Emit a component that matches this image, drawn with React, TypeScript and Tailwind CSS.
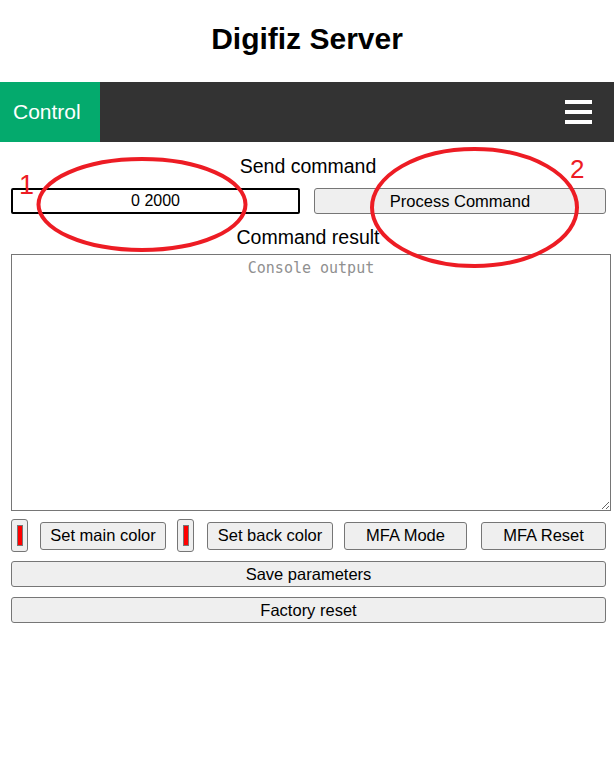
import React from "react";

const btn =
  "rounded-[3px] border border-[#767676] bg-[#efefef] text-[16.5px] text-black leading-none";

function Swatch() {
  return (
    <div className="flex h-[33px] w-[17px] shrink-0 items-center justify-center rounded-[3px] border border-[#767676] bg-[#efefef]">
      <div className="h-[21px] w-[6px] border border-[#777] bg-[#ff0000]" />
    </div>
  );
}

function Marks() {
  return (
    <svg
      className="pointer-events-none absolute left-0 top-0"
      width="614"
      height="766"
      viewBox="0 0 614 766"
    >
      <ellipse cx="142" cy="204.5" rx="103.5" ry="45.5" fill="none" stroke="#ed1c24" strokeWidth="4" />
      <ellipse cx="474.5" cy="207.5" rx="102.5" ry="58.5" fill="none" stroke="#ed1c24" strokeWidth="4" />
      <text x="19" y="194" fill="#ed1c24" fontSize="27" fontFamily="Liberation Sans, Arial, sans-serif">
        1
      </text>
      <text x="570" y="178" fill="#ed1c24" fontSize="26" fontFamily="Liberation Sans, Arial, sans-serif">
        2
      </text>
    </svg>
  );
}

export default function App() {
  return (
    <div className="relative flow-root min-h-[766px] w-full bg-white font-['Liberation_Sans',Arial,sans-serif] text-black">
      <h1 className="mb-[26px] mt-[21px] text-center text-[30px] font-bold leading-[35px]">
        Digifiz Server
      </h1>

      <nav className="flex h-[60px] items-center bg-[#333]">
        <div className="flex h-full w-[100px] items-center bg-[#04aa6d] pl-[13px] text-[21px] text-white">
          Control
        </div>
        <div className="ml-auto mr-[22px] flex flex-col gap-[6px]">
          <span className="block h-[4px] w-[27px] bg-white" />
          <span className="block h-[4px] w-[27px] bg-white" />
          <span className="block h-[4px] w-[27px] bg-white" />
        </div>
      </nav>

      <main className="pl-[11px] pr-[3px]">
        <div className="mr-[6px] mt-[13px] text-center text-[19.5px] leading-[22px]">Send command</div>
        <div className="mr-[5px] mt-[11px] flex items-center gap-[14px]">
          <input
            readOnly
            value="0 2000"
            className="h-[26px] w-[289px] rounded-[2px] border-2 border-black text-center text-[16px] outline-none"
          />
          <button className={`${btn} h-[26px] flex-1`}>Process Command</button>
        </div>

        <div className="mr-[6px] mt-[12px] text-center text-[19.5px] leading-[22px]">Command result</div>
        <textarea
          readOnly
          placeholder="Console output"
          className="mt-[6px] block h-[257px] w-full resize-y border border-[#767676] p-[2px] text-center font-['DejaVu_Sans_Mono',monospace] text-[15px] placeholder:text-[#909090]"
        />

        <div className="mr-[5px] mt-[8px] flex items-center">
          <Swatch />
          <button className={`${btn} ml-[12px] h-[28px] w-[126px]`}>Set main color</button>
          <div className="ml-[11px]">
            <Swatch />
          </div>
          <button className={`${btn} ml-[13px] h-[28px] w-[126px]`}>Set back color</button>
          <button className={`${btn} ml-[11px] h-[28px] w-[123px]`}>MFA Mode</button>
          <button className={`${btn} ml-[14px] h-[28px] flex-1`}>MFA Reset</button>
        </div>

        <div className="mr-[5px] mt-[9px] flex flex-col gap-[10px]">
          <button className={`${btn} h-[26px] w-full`}>Save parameters</button>
          <button className={`${btn} h-[26px] w-full`}>Factory reset</button>
        </div>
      </main>

      <Marks />
    </div>
  );
}
